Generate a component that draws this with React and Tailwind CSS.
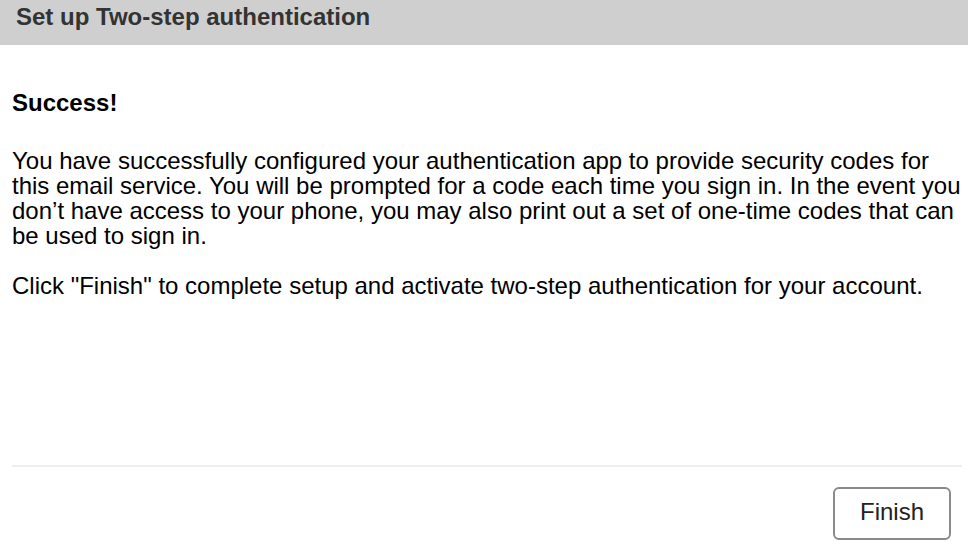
import React from 'react';

const App = () => {
    return (
        <div className="w-[968px] h-[554px] bg-white flex flex-col font-['Liberation_Sans',Arial,sans-serif] overflow-hidden">
            {/* Header bar */}
            <div className="h-[45px] bg-[#cfcfcf] flex items-start pl-4 pt-[5px] shrink-0">
                <h1 className="text-[24px] font-bold text-[#333] leading-none">Set up Two-step authentication</h1>
            </div>

            {/* Body */}
            <div className="flex-1 pl-3 pr-[6px] text-black">
                <p className="mt-[45px] text-[24px] font-bold leading-[25px]">Success!</p>
                <p className="mt-[33px] text-[24px] leading-[25px]">
                    You have successfully configured your authentication app to provide security codes for this email service. You will be prompted for a code each time you sign in. In the event you don’t have access to your phone, you may also print out a set of one-time codes that can be used to sign in.
                </p>
                <p className="mt-[25px] text-[24px] leading-[25px]">
                    Click "Finish" to complete setup and activate two-step authentication for your account.
                </p>
            </div>

            {/* Footer */}
            <div className="pl-3 pr-[6px] shrink-0">
                <div className="h-[2px] bg-[#eeeeee]" />
                <div className="flex justify-end pr-[11px] pt-[20px] pb-[14px]">
                    <button className="w-[118px] h-[53px] border-2 border-[#8a8a8a] rounded-[6px] bg-white text-[24px] text-[#222] leading-none pb-[3px]">
                        Finish
                    </button>
                </div>
            </div>
        </div>
    );
};

export default App;
